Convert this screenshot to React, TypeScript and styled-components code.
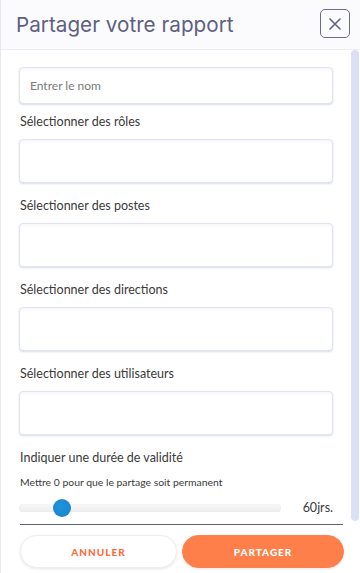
import styled, { createGlobalStyle } from "styled-components";

const GlobalStyle = createGlobalStyle`
    html, body {
        margin: 0;
        padding: 0;
        background: #ffffff;
    }
    * {
        box-sizing: border-box;
    }
`

const Modal = styled.div`
    width: 360px;
    height: 573px;
    display: flex;
    flex-direction: column;
    background: #ffffff;
    border-left: 1px solid #e6e8f0;
    font-family: "Lato", "Open Sans", sans-serif;
    overflow: hidden;
`

const Header = styled.div`
    height: 50px;
    flex-shrink: 0;
    display: flex;
    align-items: center;
    justify-content: space-between;
    padding: 0 10px 0 15px;
    background: #fbfbfe;
    border-bottom: 1px solid #eceef5;
`

const Title = styled.h1`
    margin: 0;
    font-family: "Inter", "Lato", sans-serif;
    font-size: 20.7px;
    font-weight: 400;
    color: #5e6080;
`

const CloseButton = styled.button`
    width: 30px;
    height: 29px;
    margin-top: -2px;
    display: flex;
    align-items: center;
    justify-content: center;
    padding: 0;
    background: transparent;
    border: 1px solid #6a6c89;
    border-radius: 5px;
    cursor: pointer;
`

const Main = styled.div`
    height: 474px;
    flex-shrink: 0;
    display: flex;
    overflow: hidden;
`

const Content = styled.div`
    flex: 1;
    min-width: 0;
    padding: 17px 17px 0 18px;
`

const Rail = styled.div`
    width: 10px;
    flex-shrink: 0;
    padding: 0 1px 3px 1px;
`

const RailThumb = styled.div`
    width: 8px;
    height: 100%;
    border-radius: 5px;
    background: #dbe1f3;
`

const Field = styled.div`
    display: flex;
    flex-direction: column;
`

const Label = styled.label<{ $first?: boolean }>`
    font-size: 12.5px;
    line-height: 16px;
    color: #3a3a3a;
    margin: ${p => (p.$first ? "10px" : "15px")} 0 9px 1px;
`

const Input = styled.input<{ $compact?: boolean }>`
    width: 100%;
    height: ${p => (p.$compact ? "37px" : "44px")};
    border: 1px solid #e0e4f2;
    border-radius: 4px;
    box-shadow: 0 1px 2px rgba(120, 130, 175, 0.28), inset 0 4px 4px -3px rgba(0, 0, 0, 0.05);
    padding: 0 10px;
    font-family: "Lato", sans-serif;
    font-size: 12px;
    color: #333;
    outline: none;

    &::placeholder {
        color: #7a7a7a;
    }
`

const Hint = styled.p`
    margin: 1px 0 0 1px;
    font-size: 10.4px;
    line-height: 12px;
    color: #3a3a3a;
`

const SliderRow = styled.div`
    display: flex;
    align-items: center;
    justify-content: space-between;
    margin-top: 9.5px;
    height: 20px;
`

const Track = styled.div`
    position: relative;
    width: 262px;
    height: 8px;
    border-radius: 4px;
    background: linear-gradient(to bottom, #f8f8f8, #ededed);
    box-shadow: inset 0 0 1px rgba(0, 0, 0, 0.1);
`

const Thumb = styled.div`
    position: absolute;
    top: 50%;
    width: 18px;
    height: 18px;
    margin: -9px 0 0 -9px;
    border-radius: 50%;
    background: radial-gradient(circle at 45% 40%, #1f93dc, #1a82c8);
`

const Value = styled.span`
    font-size: 12.5px;
    color: #3a3a3a;
`

const Footer = styled.div`
    flex: 1;
    margin: 0 17px 0 19px;
    border-top: 1.5px solid #5b5f78;
    display: grid;
    grid-template-columns: 157px 162px;
    column-gap: 5px;
    padding-top: 10px;
`

const Button = styled.button<{ $primary?: boolean }>`
    height: 33px;
    border-radius: 17px;
    border: 1px solid ${p => (p.$primary ? "#ff7f4a" : "#eeeeee")};
    background: ${p => (p.$primary ? "#ff7f4a" : "#ffffff")};
    color: ${p => (p.$primary ? "#ffffff" : "#ff6a3d")};
    box-shadow: 0 1px 3px rgba(0, 0, 0, 0.1);
    font-family: "Lato", sans-serif;
    font-weight: 900;
    font-size: 10px;
    letter-spacing: 1px;
    cursor: pointer;
`

const fields = [
    "Sélectionner des rôles",
    "Sélectionner des postes",
    "Sélectionner des directions",
    "Sélectionner des utilisateurs",
]

const days = 60
const max = 365

const App = () => {
    return (
        <>
            <GlobalStyle />
            <Modal>
                <Header>
                    <Title>Partager votre rapport</Title>
                    <CloseButton aria-label="Fermer">
                        <svg width="14" height="14" viewBox="0 0 14 14">
                            <path d="M2 2 L12 12 M12 2 L2 12" stroke="#5e6080" strokeWidth="1.6" strokeLinecap="round" />
                        </svg>
                    </CloseButton>
                </Header>
                <Main>
                    <Content>
                        <Field>
                            <Input $compact placeholder="Entrer le nom" />
                        </Field>
                        {fields.map((label, i) => (
                            <Field key={label}>
                                <Label $first={i === 0}>{label}</Label>
                                <Input />
                            </Field>
                        ))}
                        <Field>
                            <Label>Indiquer une durée de validité</Label>
                            <Hint>Mettre 0 pour que le partage soit permanent</Hint>
                            <SliderRow>
                                <Track>
                                    <Thumb style={{ left: `${(days / max) * 100}%` }} />
                                </Track>
                                <Value>{days}jrs.</Value>
                            </SliderRow>
                        </Field>
                    </Content>
                    <Rail>
                        <RailThumb />
                    </Rail>
                </Main>
                <Footer>
                    <Button>ANNULER</Button>
                    <Button $primary>PARTAGER</Button>
                </Footer>
            </Modal>
        </>
    );
}

export default App;
